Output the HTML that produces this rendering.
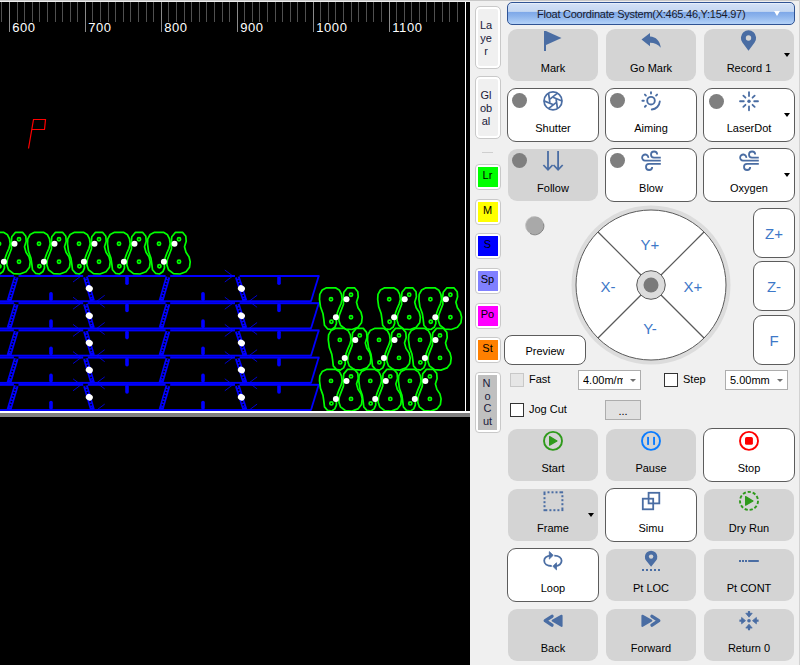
<!DOCTYPE html><html><head><meta charset="utf-8"><style>
*{box-sizing:border-box}
html,body{margin:0;padding:0}
body{width:800px;height:665px;overflow:hidden;position:relative;background:#f0f0f0;font-family:"Liberation Sans",sans-serif;color:#000}
.topline{position:absolute;left:0;top:0;width:800px;height:1px;background:#c8c8c8}
.rline{position:absolute;left:799px;top:0;width:1px;height:665px;background:#d2d2d2}
.btn{position:absolute;height:54px;border-radius:9px}
.bg{background:#d4d4d4;margin-left:1px;margin-top:1px;width:90px!important;height:52px;border-radius:9px}
.bw{background:#fff;border:1px solid #5c5c5c}
.lbl{position:absolute;left:0;right:0;top:32px;text-align:center;font-size:11px;line-height:14px;white-space:nowrap}

.dot{position:absolute;left:4px;top:4px;width:15px;height:15px;border-radius:50%;background:#7f7f7f}

.arr{position:absolute;right:4px;top:23.5px;width:0;height:0;border-left:3.5px solid transparent;border-right:3.5px solid transparent;border-top:4px solid #000}

.side{position:absolute;left:475px;width:26px;border-radius:5px;background:#f0f0f0;border:1px solid #c9c9c9;box-shadow:inset 0 0 0 2px #fff}
.side span{position:absolute;left:0;right:4px;text-align:center;font-size:11px;line-height:13px;color:#1a1a3a}
.sw{position:absolute;left:475px;width:26px;height:26px;border-radius:4px;background:#fff;border:1px solid #c9c9c9}
.sw div{position:absolute;left:2px;top:2px;width:20px;height:20px;font-size:11px;line-height:14px;text-align:center;color:#000;text-indent:-1px;padding-top:1px}
.hdr{position:absolute;left:507px;top:2px;width:288px;height:23px;border-radius:5px;border:1px solid #2f5394;background:linear-gradient(#eef4fd 0%,#d0dff5 8%,#c6d8f2 38%,#bcd2f1 41%,#7ea8e8 44%,#8cb3ec 62%,#b4d2f8 100%);font-size:11px;letter-spacing:-0.25px}
.hdr span{position:absolute;left:29px;top:5px;line-height:13px;color:#1a1a2a}
.hdr i{position:absolute;left:266px;top:7.5px;width:0;height:0;border-left:3.5px solid transparent;border-right:3.5px solid transparent;border-top:5.5px solid #fff}
.zb{position:absolute;left:753px;width:42px;height:50px;border-radius:9px;background:#fff;border:1px solid #5c5c5c;color:#3d78c8;font-size:15px;text-align:center;line-height:50px}
.pv{position:absolute;left:504px;top:335px;width:82px;height:30px;border-radius:8px;background:#fff;border:1px solid #5c5c5c;font-size:11px;text-align:center;line-height:31px}
.cb{position:absolute;width:14px;height:14px;background:#fff;border:1px solid #333}
.cbd{background:#e6e6e6;border-color:#c8c8c8}
.t11{position:absolute;font-size:11px;line-height:13px;white-space:nowrap}
.combo{position:absolute;height:20px;background:#fff;border:1px solid #adadad;font-size:11px;line-height:18px;overflow:hidden;white-space:nowrap}
.combo span{position:absolute;left:4px;top:0;width:40px;overflow:hidden}
.combo i{position:absolute;right:4px;top:8px;width:0;height:0;border-left:3.5px solid transparent;border-right:3.5px solid transparent;border-top:3.5px solid #707070}
.dots3{position:absolute;left:605px;top:400px;width:36px;height:20px;background:#e1e1e1;border:1px solid #adadad;font-size:11px;text-align:center;line-height:20px}
</style></head><body>
<svg width="470" height="665" viewBox="0 0 470 665" style="position:absolute;left:0;top:0">
<defs>
<g id="pr"><path d="M-4.50,-11.50 L4.50,-11.50 L8.50,-9.00 L10.50,-5.00 L11.20,0.00 L10.00,4.50 L8.00,9.00 L6.20,14.00 L5.20,19.00 L5.50,24.00 L3.80,28.00 L0.50,30.20 L-3.50,29.50 L-6.50,26.00 L-7.20,20.00 L-8.00,14.50 L-10.50,7.50 L-11.50,0.00 L-11.20,-5.00 L-8.80,-9.30 Z"/><path d="M16.50,-11.50 L23.50,-11.50 L26.80,-7.50 L27.20,-2.50 L25.50,3.00 L27.00,8.50 L30.00,13.00 L31.20,18.00 L30.50,23.50 L27.00,28.00 L21.00,30.20 L14.50,29.80 L9.50,26.00 L7.80,21.00 L8.30,16.00 L10.20,11.00 L12.50,5.00 L12.20,-1.00 L12.80,-7.00 Z"/><circle cx="0" cy="0" r="1.6"/><circle cx="0.4" cy="22.5" r="1.6"/><circle cx="20" cy="-4.5" r="1.6"/><circle cx="20" cy="18" r="1.6"/></g>
</defs>
<rect x="0" y="0" width="470" height="665" fill="#000"/>
<rect x="0" y="0" width="470" height="1" fill="#c8c8c8"/>
<rect x="0" y="1" width="470" height="1" fill="#f0f0f0"/>
<line x1="1.5" y1="2" x2="1.5" y2="22" stroke="#505050" stroke-width="1"/>
<line x1="9.5" y1="2" x2="9.5" y2="32" stroke="#8a8a8a" stroke-width="1"/>
<line x1="17.5" y1="2" x2="17.5" y2="22" stroke="#505050" stroke-width="1"/>
<line x1="24.5" y1="2" x2="24.5" y2="22" stroke="#505050" stroke-width="1"/>
<line x1="32.5" y1="2" x2="32.5" y2="22" stroke="#505050" stroke-width="1"/>
<line x1="39.5" y1="2" x2="39.5" y2="22" stroke="#505050" stroke-width="1"/>
<line x1="47.5" y1="2" x2="47.5" y2="22" stroke="#505050" stroke-width="1"/>
<line x1="55.5" y1="2" x2="55.5" y2="22" stroke="#505050" stroke-width="1"/>
<line x1="62.5" y1="2" x2="62.5" y2="22" stroke="#505050" stroke-width="1"/>
<line x1="70.5" y1="2" x2="70.5" y2="22" stroke="#505050" stroke-width="1"/>
<line x1="77.5" y1="2" x2="77.5" y2="22" stroke="#505050" stroke-width="1"/>
<line x1="85.5" y1="2" x2="85.5" y2="32" stroke="#8a8a8a" stroke-width="1"/>
<line x1="92.5" y1="2" x2="92.5" y2="22" stroke="#505050" stroke-width="1"/>
<line x1="100.5" y1="2" x2="100.5" y2="22" stroke="#505050" stroke-width="1"/>
<line x1="108.5" y1="2" x2="108.5" y2="22" stroke="#505050" stroke-width="1"/>
<line x1="115.5" y1="2" x2="115.5" y2="22" stroke="#505050" stroke-width="1"/>
<line x1="123.5" y1="2" x2="123.5" y2="22" stroke="#505050" stroke-width="1"/>
<line x1="130.5" y1="2" x2="130.5" y2="22" stroke="#505050" stroke-width="1"/>
<line x1="138.5" y1="2" x2="138.5" y2="22" stroke="#505050" stroke-width="1"/>
<line x1="146.5" y1="2" x2="146.5" y2="22" stroke="#505050" stroke-width="1"/>
<line x1="153.5" y1="2" x2="153.5" y2="22" stroke="#505050" stroke-width="1"/>
<line x1="161.5" y1="2" x2="161.5" y2="32" stroke="#8a8a8a" stroke-width="1"/>
<line x1="168.5" y1="2" x2="168.5" y2="22" stroke="#505050" stroke-width="1"/>
<line x1="176.5" y1="2" x2="176.5" y2="22" stroke="#505050" stroke-width="1"/>
<line x1="184.5" y1="2" x2="184.5" y2="22" stroke="#505050" stroke-width="1"/>
<line x1="191.5" y1="2" x2="191.5" y2="22" stroke="#505050" stroke-width="1"/>
<line x1="199.5" y1="2" x2="199.5" y2="22" stroke="#505050" stroke-width="1"/>
<line x1="206.5" y1="2" x2="206.5" y2="22" stroke="#505050" stroke-width="1"/>
<line x1="214.5" y1="2" x2="214.5" y2="22" stroke="#505050" stroke-width="1"/>
<line x1="222.5" y1="2" x2="222.5" y2="22" stroke="#505050" stroke-width="1"/>
<line x1="229.5" y1="2" x2="229.5" y2="22" stroke="#505050" stroke-width="1"/>
<line x1="237.5" y1="2" x2="237.5" y2="32" stroke="#8a8a8a" stroke-width="1"/>
<line x1="244.5" y1="2" x2="244.5" y2="22" stroke="#505050" stroke-width="1"/>
<line x1="252.5" y1="2" x2="252.5" y2="22" stroke="#505050" stroke-width="1"/>
<line x1="259.5" y1="2" x2="259.5" y2="22" stroke="#505050" stroke-width="1"/>
<line x1="267.5" y1="2" x2="267.5" y2="22" stroke="#505050" stroke-width="1"/>
<line x1="275.5" y1="2" x2="275.5" y2="22" stroke="#505050" stroke-width="1"/>
<line x1="282.5" y1="2" x2="282.5" y2="22" stroke="#505050" stroke-width="1"/>
<line x1="290.5" y1="2" x2="290.5" y2="22" stroke="#505050" stroke-width="1"/>
<line x1="297.5" y1="2" x2="297.5" y2="22" stroke="#505050" stroke-width="1"/>
<line x1="305.5" y1="2" x2="305.5" y2="22" stroke="#505050" stroke-width="1"/>
<line x1="313.5" y1="2" x2="313.5" y2="32" stroke="#8a8a8a" stroke-width="1"/>
<line x1="320.5" y1="2" x2="320.5" y2="22" stroke="#505050" stroke-width="1"/>
<line x1="328.5" y1="2" x2="328.5" y2="22" stroke="#505050" stroke-width="1"/>
<line x1="335.5" y1="2" x2="335.5" y2="22" stroke="#505050" stroke-width="1"/>
<line x1="343.5" y1="2" x2="343.5" y2="22" stroke="#505050" stroke-width="1"/>
<line x1="351.5" y1="2" x2="351.5" y2="22" stroke="#505050" stroke-width="1"/>
<line x1="358.5" y1="2" x2="358.5" y2="22" stroke="#505050" stroke-width="1"/>
<line x1="366.5" y1="2" x2="366.5" y2="22" stroke="#505050" stroke-width="1"/>
<line x1="373.5" y1="2" x2="373.5" y2="22" stroke="#505050" stroke-width="1"/>
<line x1="381.5" y1="2" x2="381.5" y2="22" stroke="#505050" stroke-width="1"/>
<line x1="389.5" y1="2" x2="389.5" y2="32" stroke="#8a8a8a" stroke-width="1"/>
<line x1="396.5" y1="2" x2="396.5" y2="22" stroke="#505050" stroke-width="1"/>
<line x1="404.5" y1="2" x2="404.5" y2="22" stroke="#505050" stroke-width="1"/>
<line x1="411.5" y1="2" x2="411.5" y2="22" stroke="#505050" stroke-width="1"/>
<line x1="419.5" y1="2" x2="419.5" y2="22" stroke="#505050" stroke-width="1"/>
<line x1="426.5" y1="2" x2="426.5" y2="22" stroke="#505050" stroke-width="1"/>
<line x1="434.5" y1="2" x2="434.5" y2="22" stroke="#505050" stroke-width="1"/>
<line x1="442.5" y1="2" x2="442.5" y2="22" stroke="#505050" stroke-width="1"/>
<line x1="449.5" y1="2" x2="449.5" y2="22" stroke="#505050" stroke-width="1"/>
<line x1="457.5" y1="2" x2="457.5" y2="22" stroke="#505050" stroke-width="1"/>
<text x="12.2" y="32" fill="#fff" font-family="Liberation Sans" font-size="13" letter-spacing="0.6">600</text>
<text x="88.2" y="32" fill="#fff" font-family="Liberation Sans" font-size="13" letter-spacing="0.6">700</text>
<text x="164.2" y="32" fill="#fff" font-family="Liberation Sans" font-size="13" letter-spacing="0.6">800</text>
<text x="240.2" y="32" fill="#fff" font-family="Liberation Sans" font-size="13" letter-spacing="0.6">900</text>
<text x="316.2" y="32" fill="#fff" font-family="Liberation Sans" font-size="13" letter-spacing="0.6">1000</text>
<text x="392.2" y="32" fill="#fff" font-family="Liberation Sans" font-size="13" letter-spacing="0.6">1100</text>
<path d="M28.5,148.5 L33.5,119.5 L45.5,119.5 L44.5,129.5 L31.5,129.5" fill="none" stroke="#ff0000" stroke-width="1.2"/>
<rect x="465" y="2" width="1" height="409" fill="#fff"/>
<rect x="0" y="275.0" width="319.5" height="2" fill="#0000ff"/>
<rect x="0" y="300.3" width="311.5" height="2" fill="#0000ff"/>
<line x1="318.7" y1="276.0" x2="311" y2="301.3" stroke="#0000ff" stroke-width="1.8"/>
<rect x="13.9" y="275.0" width="4.6" height="2" fill="#000"/>
<line x1="16.2" y1="277.0" x2="9.0" y2="301.0" stroke="#0000ff" stroke-width="4.8"/>
<line x1="16.2" y1="277.0" x2="15.6" y2="279.0" stroke="#000" stroke-width="0.9"/>
<line x1="15.2" y1="280.3" x2="9.7" y2="298.5" stroke="#000" stroke-width="1.6" stroke-dasharray="1.6 1.5"/>
<rect x="165.6" y="275.0" width="4.6" height="2" fill="#000"/>
<line x1="167.9" y1="277.0" x2="161.0" y2="301.0" stroke="#0000ff" stroke-width="4.8"/>
<line x1="167.9" y1="277.0" x2="167.3" y2="279.0" stroke="#000" stroke-width="0.9"/>
<line x1="166.9" y1="280.3" x2="161.7" y2="298.5" stroke="#000" stroke-width="1.6" stroke-dasharray="1.6 1.5"/>
<rect x="83.2" y="275.0" width="4.6" height="2" fill="#000"/>
<line x1="85.5" y1="277.0" x2="92.5" y2="301.0" stroke="#0000ff" stroke-width="4.8"/>
<line x1="85.5" y1="277.0" x2="86.1" y2="279.0" stroke="#000" stroke-width="0.9"/>
<line x1="86.5" y1="280.3" x2="91.8" y2="298.5" stroke="#000" stroke-width="1.6" stroke-dasharray="1.6 1.5"/>
<rect x="235.0" y="275.0" width="4.6" height="2" fill="#000"/>
<line x1="237.3" y1="277.0" x2="244.9" y2="301.0" stroke="#0000ff" stroke-width="4.8"/>
<line x1="237.3" y1="277.0" x2="237.9" y2="279.0" stroke="#000" stroke-width="0.9"/>
<line x1="238.4" y1="280.3" x2="244.1" y2="298.5" stroke="#000" stroke-width="1.6" stroke-dasharray="1.6 1.5"/>
<ellipse cx="89.3" cy="288.5" rx="3.6" ry="3.2" fill="#fff" transform="rotate(30 89.3 288.5)"/>
<path d="M73.0,270.0 L81.0,276.0 L73.0,282.0" fill="none" stroke="#0000ff" stroke-width="0.8"/>
<path d="M104.7,295.3 L96.7,301.3 L104.7,307.3" fill="none" stroke="#0000ff" stroke-width="0.8"/>
<ellipse cx="241.4" cy="288.5" rx="3.6" ry="3.2" fill="#fff" transform="rotate(30 241.4 288.5)"/>
<path d="M224.8,270.0 L232.8,276.0 L224.8,282.0" fill="none" stroke="#0000ff" stroke-width="0.8"/>
<path d="M257.1,295.3 L249.1,301.3 L257.1,307.3" fill="none" stroke="#0000ff" stroke-width="0.8"/>
<rect x="49.2" y="292.0" width="3.6" height="9" rx="1.8" fill="#0000ff"/>
<rect x="201.2" y="292.0" width="3.6" height="9" rx="1.8" fill="#0000ff"/>
<rect x="125.2" y="276.0" width="3.6" height="9" rx="1.8" fill="#0000ff"/>
<rect x="277.2" y="276.0" width="3.6" height="9" rx="1.8" fill="#0000ff"/>
<rect x="0" y="302.2" width="319.5" height="2" fill="#0000ff"/>
<rect x="0" y="327.5" width="311.5" height="2" fill="#0000ff"/>
<line x1="318.7" y1="303.2" x2="311" y2="328.5" stroke="#0000ff" stroke-width="1.8"/>
<rect x="13.9" y="302.2" width="4.6" height="2" fill="#000"/>
<line x1="16.2" y1="304.2" x2="9.0" y2="328.2" stroke="#0000ff" stroke-width="4.8"/>
<line x1="16.2" y1="304.2" x2="15.6" y2="306.2" stroke="#000" stroke-width="0.9"/>
<line x1="15.2" y1="307.5" x2="9.7" y2="325.7" stroke="#000" stroke-width="1.6" stroke-dasharray="1.6 1.5"/>
<rect x="165.6" y="302.2" width="4.6" height="2" fill="#000"/>
<line x1="167.9" y1="304.2" x2="161.0" y2="328.2" stroke="#0000ff" stroke-width="4.8"/>
<line x1="167.9" y1="304.2" x2="167.3" y2="306.2" stroke="#000" stroke-width="0.9"/>
<line x1="166.9" y1="307.5" x2="161.7" y2="325.7" stroke="#000" stroke-width="1.6" stroke-dasharray="1.6 1.5"/>
<rect x="83.2" y="302.2" width="4.6" height="2" fill="#000"/>
<line x1="85.5" y1="304.2" x2="92.5" y2="328.2" stroke="#0000ff" stroke-width="4.8"/>
<line x1="85.5" y1="304.2" x2="86.1" y2="306.2" stroke="#000" stroke-width="0.9"/>
<line x1="86.5" y1="307.5" x2="91.8" y2="325.7" stroke="#000" stroke-width="1.6" stroke-dasharray="1.6 1.5"/>
<rect x="235.0" y="302.2" width="4.6" height="2" fill="#000"/>
<line x1="237.3" y1="304.2" x2="244.9" y2="328.2" stroke="#0000ff" stroke-width="4.8"/>
<line x1="237.3" y1="304.2" x2="237.9" y2="306.2" stroke="#000" stroke-width="0.9"/>
<line x1="238.4" y1="307.5" x2="244.1" y2="325.7" stroke="#000" stroke-width="1.6" stroke-dasharray="1.6 1.5"/>
<ellipse cx="89.3" cy="315.7" rx="3.6" ry="3.2" fill="#fff" transform="rotate(30 89.3 315.7)"/>
<path d="M73.0,297.2 L81.0,303.2 L73.0,309.2" fill="none" stroke="#0000ff" stroke-width="0.8"/>
<path d="M104.7,322.5 L96.7,328.5 L104.7,334.5" fill="none" stroke="#0000ff" stroke-width="0.8"/>
<ellipse cx="241.4" cy="315.7" rx="3.6" ry="3.2" fill="#fff" transform="rotate(30 241.4 315.7)"/>
<path d="M224.8,297.2 L232.8,303.2 L224.8,309.2" fill="none" stroke="#0000ff" stroke-width="0.8"/>
<path d="M257.1,322.5 L249.1,328.5 L257.1,334.5" fill="none" stroke="#0000ff" stroke-width="0.8"/>
<rect x="49.2" y="319.2" width="3.6" height="9" rx="1.8" fill="#0000ff"/>
<rect x="201.2" y="319.2" width="3.6" height="9" rx="1.8" fill="#0000ff"/>
<rect x="125.2" y="303.2" width="3.6" height="9" rx="1.8" fill="#0000ff"/>
<rect x="277.2" y="303.2" width="3.6" height="9" rx="1.8" fill="#0000ff"/>
<rect x="0" y="329.4" width="319.5" height="2" fill="#0000ff"/>
<rect x="0" y="354.7" width="311.5" height="2" fill="#0000ff"/>
<line x1="318.7" y1="330.4" x2="311" y2="355.7" stroke="#0000ff" stroke-width="1.8"/>
<rect x="13.9" y="329.4" width="4.6" height="2" fill="#000"/>
<line x1="16.2" y1="331.4" x2="9.0" y2="355.4" stroke="#0000ff" stroke-width="4.8"/>
<line x1="16.2" y1="331.4" x2="15.6" y2="333.4" stroke="#000" stroke-width="0.9"/>
<line x1="15.2" y1="334.7" x2="9.7" y2="352.9" stroke="#000" stroke-width="1.6" stroke-dasharray="1.6 1.5"/>
<rect x="165.6" y="329.4" width="4.6" height="2" fill="#000"/>
<line x1="167.9" y1="331.4" x2="161.0" y2="355.4" stroke="#0000ff" stroke-width="4.8"/>
<line x1="167.9" y1="331.4" x2="167.3" y2="333.4" stroke="#000" stroke-width="0.9"/>
<line x1="166.9" y1="334.7" x2="161.7" y2="352.9" stroke="#000" stroke-width="1.6" stroke-dasharray="1.6 1.5"/>
<rect x="83.2" y="329.4" width="4.6" height="2" fill="#000"/>
<line x1="85.5" y1="331.4" x2="92.5" y2="355.4" stroke="#0000ff" stroke-width="4.8"/>
<line x1="85.5" y1="331.4" x2="86.1" y2="333.4" stroke="#000" stroke-width="0.9"/>
<line x1="86.5" y1="334.7" x2="91.8" y2="352.9" stroke="#000" stroke-width="1.6" stroke-dasharray="1.6 1.5"/>
<rect x="235.0" y="329.4" width="4.6" height="2" fill="#000"/>
<line x1="237.3" y1="331.4" x2="244.9" y2="355.4" stroke="#0000ff" stroke-width="4.8"/>
<line x1="237.3" y1="331.4" x2="237.9" y2="333.4" stroke="#000" stroke-width="0.9"/>
<line x1="238.4" y1="334.7" x2="244.1" y2="352.9" stroke="#000" stroke-width="1.6" stroke-dasharray="1.6 1.5"/>
<ellipse cx="89.3" cy="342.9" rx="3.6" ry="3.2" fill="#fff" transform="rotate(30 89.3 342.9)"/>
<path d="M73.0,324.4 L81.0,330.4 L73.0,336.4" fill="none" stroke="#0000ff" stroke-width="0.8"/>
<path d="M104.7,349.7 L96.7,355.7 L104.7,361.7" fill="none" stroke="#0000ff" stroke-width="0.8"/>
<ellipse cx="241.4" cy="342.9" rx="3.6" ry="3.2" fill="#fff" transform="rotate(30 241.4 342.9)"/>
<path d="M224.8,324.4 L232.8,330.4 L224.8,336.4" fill="none" stroke="#0000ff" stroke-width="0.8"/>
<path d="M257.1,349.7 L249.1,355.7 L257.1,361.7" fill="none" stroke="#0000ff" stroke-width="0.8"/>
<rect x="49.2" y="346.4" width="3.6" height="9" rx="1.8" fill="#0000ff"/>
<rect x="201.2" y="346.4" width="3.6" height="9" rx="1.8" fill="#0000ff"/>
<rect x="125.2" y="330.4" width="3.6" height="9" rx="1.8" fill="#0000ff"/>
<rect x="277.2" y="330.4" width="3.6" height="9" rx="1.8" fill="#0000ff"/>
<rect x="0" y="356.6" width="319.5" height="2" fill="#0000ff"/>
<rect x="0" y="381.9" width="311.5" height="2" fill="#0000ff"/>
<line x1="318.7" y1="357.6" x2="311" y2="382.9" stroke="#0000ff" stroke-width="1.8"/>
<rect x="13.9" y="356.6" width="4.6" height="2" fill="#000"/>
<line x1="16.2" y1="358.6" x2="9.0" y2="382.6" stroke="#0000ff" stroke-width="4.8"/>
<line x1="16.2" y1="358.6" x2="15.6" y2="360.6" stroke="#000" stroke-width="0.9"/>
<line x1="15.2" y1="361.9" x2="9.7" y2="380.1" stroke="#000" stroke-width="1.6" stroke-dasharray="1.6 1.5"/>
<rect x="165.6" y="356.6" width="4.6" height="2" fill="#000"/>
<line x1="167.9" y1="358.6" x2="161.0" y2="382.6" stroke="#0000ff" stroke-width="4.8"/>
<line x1="167.9" y1="358.6" x2="167.3" y2="360.6" stroke="#000" stroke-width="0.9"/>
<line x1="166.9" y1="361.9" x2="161.7" y2="380.1" stroke="#000" stroke-width="1.6" stroke-dasharray="1.6 1.5"/>
<rect x="83.2" y="356.6" width="4.6" height="2" fill="#000"/>
<line x1="85.5" y1="358.6" x2="92.5" y2="382.6" stroke="#0000ff" stroke-width="4.8"/>
<line x1="85.5" y1="358.6" x2="86.1" y2="360.6" stroke="#000" stroke-width="0.9"/>
<line x1="86.5" y1="361.9" x2="91.8" y2="380.1" stroke="#000" stroke-width="1.6" stroke-dasharray="1.6 1.5"/>
<rect x="235.0" y="356.6" width="4.6" height="2" fill="#000"/>
<line x1="237.3" y1="358.6" x2="244.9" y2="382.6" stroke="#0000ff" stroke-width="4.8"/>
<line x1="237.3" y1="358.6" x2="237.9" y2="360.6" stroke="#000" stroke-width="0.9"/>
<line x1="238.4" y1="361.9" x2="244.1" y2="380.1" stroke="#000" stroke-width="1.6" stroke-dasharray="1.6 1.5"/>
<ellipse cx="89.3" cy="370.1" rx="3.6" ry="3.2" fill="#fff" transform="rotate(30 89.3 370.1)"/>
<path d="M73.0,351.6 L81.0,357.6 L73.0,363.6" fill="none" stroke="#0000ff" stroke-width="0.8"/>
<path d="M104.7,376.9 L96.7,382.9 L104.7,388.9" fill="none" stroke="#0000ff" stroke-width="0.8"/>
<ellipse cx="241.4" cy="370.1" rx="3.6" ry="3.2" fill="#fff" transform="rotate(30 241.4 370.1)"/>
<path d="M224.8,351.6 L232.8,357.6 L224.8,363.6" fill="none" stroke="#0000ff" stroke-width="0.8"/>
<path d="M257.1,376.9 L249.1,382.9 L257.1,388.9" fill="none" stroke="#0000ff" stroke-width="0.8"/>
<rect x="49.2" y="373.6" width="3.6" height="9" rx="1.8" fill="#0000ff"/>
<rect x="201.2" y="373.6" width="3.6" height="9" rx="1.8" fill="#0000ff"/>
<rect x="125.2" y="357.6" width="3.6" height="9" rx="1.8" fill="#0000ff"/>
<rect x="277.2" y="357.6" width="3.6" height="9" rx="1.8" fill="#0000ff"/>
<rect x="0" y="383.8" width="319.5" height="2" fill="#0000ff"/>
<rect x="0" y="409.1" width="311.5" height="2" fill="#0000ff"/>
<line x1="318.7" y1="384.8" x2="311" y2="410.1" stroke="#0000ff" stroke-width="1.8"/>
<rect x="13.9" y="383.8" width="4.6" height="2" fill="#000"/>
<line x1="16.2" y1="385.8" x2="9.0" y2="409.8" stroke="#0000ff" stroke-width="4.8"/>
<line x1="16.2" y1="385.8" x2="15.6" y2="387.8" stroke="#000" stroke-width="0.9"/>
<line x1="15.2" y1="389.1" x2="9.7" y2="407.3" stroke="#000" stroke-width="1.6" stroke-dasharray="1.6 1.5"/>
<rect x="165.6" y="383.8" width="4.6" height="2" fill="#000"/>
<line x1="167.9" y1="385.8" x2="161.0" y2="409.8" stroke="#0000ff" stroke-width="4.8"/>
<line x1="167.9" y1="385.8" x2="167.3" y2="387.8" stroke="#000" stroke-width="0.9"/>
<line x1="166.9" y1="389.1" x2="161.7" y2="407.3" stroke="#000" stroke-width="1.6" stroke-dasharray="1.6 1.5"/>
<rect x="83.2" y="383.8" width="4.6" height="2" fill="#000"/>
<line x1="85.5" y1="385.8" x2="92.5" y2="409.8" stroke="#0000ff" stroke-width="4.8"/>
<line x1="85.5" y1="385.8" x2="86.1" y2="387.8" stroke="#000" stroke-width="0.9"/>
<line x1="86.5" y1="389.1" x2="91.8" y2="407.3" stroke="#000" stroke-width="1.6" stroke-dasharray="1.6 1.5"/>
<rect x="235.0" y="383.8" width="4.6" height="2" fill="#000"/>
<line x1="237.3" y1="385.8" x2="244.9" y2="409.8" stroke="#0000ff" stroke-width="4.8"/>
<line x1="237.3" y1="385.8" x2="237.9" y2="387.8" stroke="#000" stroke-width="0.9"/>
<line x1="238.4" y1="389.1" x2="244.1" y2="407.3" stroke="#000" stroke-width="1.6" stroke-dasharray="1.6 1.5"/>
<ellipse cx="89.3" cy="397.3" rx="3.6" ry="3.2" fill="#fff" transform="rotate(30 89.3 397.3)"/>
<path d="M73.0,378.8 L81.0,384.8 L73.0,390.8" fill="none" stroke="#0000ff" stroke-width="0.8"/>
<path d="M104.7,404.1 L96.7,410.1 L104.7,416.1" fill="none" stroke="#0000ff" stroke-width="0.8"/>
<ellipse cx="241.4" cy="397.3" rx="3.6" ry="3.2" fill="#fff" transform="rotate(30 241.4 397.3)"/>
<path d="M224.8,378.8 L232.8,384.8 L224.8,390.8" fill="none" stroke="#0000ff" stroke-width="0.8"/>
<path d="M257.1,404.1 L249.1,410.1 L257.1,416.1" fill="none" stroke="#0000ff" stroke-width="0.8"/>
<rect x="49.2" y="400.8" width="3.6" height="9" rx="1.8" fill="#0000ff"/>
<rect x="201.2" y="400.8" width="3.6" height="9" rx="1.8" fill="#0000ff"/>
<rect x="125.2" y="384.8" width="3.6" height="9" rx="1.8" fill="#0000ff"/>
<rect x="277.2" y="384.8" width="3.6" height="9" rx="1.8" fill="#0000ff"/>
<g fill="none" stroke="#00ff00" stroke-width="1.7" stroke-linejoin="round">
<use href="#pr" x="-1.00" y="243.8"/>
<use href="#pr" x="39.00" y="243.8"/>
<use href="#pr" x="79.00" y="243.8"/>
<use href="#pr" x="119.00" y="243.8"/>
<use href="#pr" x="159.00" y="243.8"/>
<use href="#pr" x="331.00" y="299.30"/>
<use href="#pr" x="389.20" y="299.30"/>
<use href="#pr" x="430.40" y="299.30"/>
<use href="#pr" x="339.80" y="339.90"/>
<use href="#pr" x="379.00" y="339.90"/>
<use href="#pr" x="420.00" y="339.90"/>
<use href="#pr" x="331.00" y="380.90"/>
<use href="#pr" x="370.30" y="380.90"/>
<use href="#pr" x="409.90" y="380.90"/>
</g><g fill="#fff">
<circle cx="14.50" cy="243.80" r="3"/><circle cx="3.90" cy="261.80" r="3"/>
<circle cx="54.50" cy="243.80" r="3"/><circle cx="43.90" cy="261.80" r="3"/>
<circle cx="94.50" cy="243.80" r="3"/><circle cx="83.90" cy="261.80" r="3"/>
<circle cx="134.50" cy="243.80" r="3"/><circle cx="123.90" cy="261.80" r="3"/>
<circle cx="174.50" cy="243.80" r="3"/><circle cx="163.90" cy="261.80" r="3"/>
<circle cx="346.50" cy="299.30" r="3"/><circle cx="335.90" cy="317.30" r="3"/>
<circle cx="404.70" cy="299.30" r="3"/><circle cx="394.10" cy="317.30" r="3"/>
<circle cx="445.90" cy="299.30" r="3"/><circle cx="435.30" cy="317.30" r="3"/>
<circle cx="355.30" cy="339.90" r="3"/><circle cx="344.70" cy="357.90" r="3"/>
<circle cx="394.50" cy="339.90" r="3"/><circle cx="383.90" cy="357.90" r="3"/>
<circle cx="435.50" cy="339.90" r="3"/><circle cx="424.90" cy="357.90" r="3"/>
<circle cx="346.50" cy="380.90" r="3"/><circle cx="335.90" cy="398.90" r="3"/>
<circle cx="385.80" cy="380.90" r="3"/><circle cx="375.20" cy="398.90" r="3"/>
<circle cx="425.40" cy="380.90" r="3"/><circle cx="414.80" cy="398.90" r="3"/>
</g>
<rect x="0" y="411" width="470" height="2" fill="#fff"/>
<rect x="0" y="413" width="470" height="4" fill="#808080"/>
</svg>
<div class="topline"></div><div class="rline"></div>

<div class="side" style="top:6px;height:63px"><span style="top:12px">La<br>ye<br>r</span></div>
<div class="side" style="top:76px;height:63px"><span style="top:12px">Gl<br>ob<br>al</span></div>
<div style="position:absolute;left:482px;top:152px;width:11px;height:1px;background:#cfcfcf"></div>
<div class="sw" style="top:164px"><div style="background:#00ff00">Lr</div></div>
<div class="sw" style="top:199px"><div style="background:#ffff00">M</div></div>
<div class="sw" style="top:233px"><div style="background:#0000ff">S</div></div>
<div class="sw" style="top:268px"><div style="background:#8080ff">Sp</div></div>
<div class="sw" style="top:303px"><div style="background:#ff00ff">Po</div></div>
<div class="sw" style="top:337px"><div style="background:#ff8000">St</div></div>
<div class="sw" style="top:372px;height:61px"><div style="background:#c0c0c0;height:55px;width:19px;line-height:12.6px;padding-top:2px;text-indent:-2px;color:#1a1a3a">N<br>o<br>C<br>ut</div></div>

<div class="hdr"><span>Float Coordinate System(X:465.46,Y:154.97)</span><i></i></div>

<svg width="800" height="665" style="position:absolute;left:0;top:0">
<circle cx="534.7" cy="225.5" r="9.3" fill="#a9a9a9"/><path d="M543.6,223.5 A9.1,9.1 0 0 1 530,233.4" fill="none" stroke="#7a7a7a" stroke-width="0.9"/><path d="M526.2,229 A9.1,9.1 0 0 1 536,216.5" fill="none" stroke="#c8c8c8" stroke-width="0.8"/>
<circle cx="651" cy="285" r="79.5" fill="#dcdcdc"/>
<circle cx="651" cy="285" r="75" fill="#fff" stroke="#5a5a5a" stroke-width="1"/>
<g stroke="#5a5a5a" stroke-width="1.2">
<line x1="598" y1="232" x2="641" y2="275"/><line x1="704" y1="232" x2="661" y2="275"/>
<line x1="598" y1="338" x2="641" y2="295"/><line x1="704" y1="338" x2="661" y2="295"/>
</g>
<circle cx="651" cy="285" r="14.3" fill="#dcdcdc" stroke="#5a5a5a" stroke-width="1"/>
<circle cx="651" cy="285" r="7.5" fill="#7a7a7a"/>
<g fill="#3d78c8" font-family="Liberation Sans" font-size="15" text-anchor="middle">
<text x="650" y="250">Y+</text><text x="608" y="292">X-</text><text x="693" y="292">X+</text><text x="650" y="334">Y-</text>
</g>
</svg>
<div class="zb" style="top:208px">Z+</div>
<div class="zb" style="top:261px">Z-</div>
<div class="zb" style="top:315px">F</div>
<div class="pv">Preview</div>
<div class="cb cbd" style="left:510px;top:373px"></div><div class="t11" style="left:529px;top:373px">Fast</div>
<div class="combo" style="left:578px;top:370px;width:63px"><span>4.00m/m</span><i></i></div>
<div class="cb" style="left:664px;top:373px"></div><div class="t11" style="left:683px;top:373px">Step</div>
<div class="combo" style="left:725px;top:370px;width:63px"><span>5.00mm</span><i></i></div>
<div class="cb" style="left:510px;top:403px"></div><div class="t11" style="left:529px;top:403px">Jog Cut</div>
<div class="dots3">...</div>

<div class="btn bg" style="left:507px;top:28px;width:92px"><span class="lbl">Mark</span></div>
<div class="btn bg" style="left:605px;top:28px;width:92px"><span class="lbl">Go Mark</span></div>
<div class="btn bg" style="left:703px;top:28px;width:92px"><span class="arr"></span><span class="lbl">Record 1</span></div>
<div class="btn bw" style="left:507px;top:88px;width:92px"><span class="dot"></span><span class="lbl">Shutter</span></div>
<div class="btn bw" style="left:605px;top:88px;width:92px"><span class="dot"></span><span class="lbl">Aiming</span></div>
<div class="btn bw" style="left:703px;top:88px;width:92px"><span class="dot" style="left:5px;top:5px"></span><span class="arr"></span><span class="lbl">LaserDot</span></div>
<div class="btn bg" style="left:507px;top:148px;width:92px"><span class="dot"></span><span class="lbl">Follow</span></div>
<div class="btn bw" style="left:605px;top:148px;width:92px"><span class="dot"></span><span class="lbl">Blow</span></div>
<div class="btn bw" style="left:703px;top:148px;width:92px"><span class="arr"></span><span class="lbl">Oxygen</span></div>
<div class="btn bg" style="left:507px;top:428px;width:92px"><span class="lbl">Start</span></div>
<div class="btn bg" style="left:605px;top:428px;width:92px"><span class="lbl">Pause</span></div>
<div class="btn bw" style="left:703px;top:428px;width:92px"><span class="lbl">Stop</span></div>
<div class="btn bg" style="left:507px;top:488px;width:92px"><span class="arr"></span><span class="lbl">Frame</span></div>
<div class="btn bw" style="left:605px;top:488px;width:92px"><span class="lbl">Simu</span></div>
<div class="btn bg" style="left:703px;top:488px;width:92px"><span class="lbl">Dry Run</span></div>
<div class="btn bw" style="left:507px;top:548px;width:92px"><span class="lbl">Loop</span></div>
<div class="btn bg" style="left:605px;top:548px;width:92px"><span class="lbl">Pt LOC</span></div>
<div class="btn bg" style="left:703px;top:548px;width:92px"><span class="lbl">Pt CONT</span></div>
<div class="btn bg" style="left:507px;top:608px;width:92px"><span class="lbl">Back</span></div>
<div class="btn bg" style="left:605px;top:608px;width:92px"><span class="lbl">Forward</span></div>
<div class="btn bg" style="left:703px;top:608px;width:92px"><span class="lbl">Return 0</span></div>
<svg width="800" height="665" style="position:absolute;left:0;top:0;pointer-events:none"><g transform="translate(0.0,0.0)" fill="#4a6da3"><rect x="544" y="31" width="2" height="20"/><path d="M546,31 L561.5,38 L546,45 Z"/></g><g transform="translate(0.0,0.0)"><path d="M641.5,39.5 L650,33 L650,36.6 C656,36.8 660,41 660.8,47.8 C658,44.5 654.5,42.8 650,42.8 L650,46.3 Z" fill="#4a6da3"/></g><g transform="translate(0.0,0.0)"><path d="M748.5,50.75 L742.4,42.5 A7.6,7.6 0 1 1 754.6,42.5 Z" fill="#4a6da3"/><circle cx="748.5" cy="38" r="2.7" fill="#d4d4d4"/></g><g fill="none" stroke="#4a6da3" stroke-width="1.7"><circle cx="553.0" cy="100.9" r="9"/><line x1="553.00" y1="97.30" x2="562.00" y2="100.94"/><line x1="556.12" y1="99.10" x2="557.47" y2="108.71"/><line x1="556.12" y1="102.70" x2="548.47" y2="108.68"/><line x1="553.00" y1="104.50" x2="544.00" y2="100.86"/><line x1="549.88" y1="102.70" x2="548.53" y2="93.09"/><line x1="549.88" y1="99.10" x2="557.53" y2="93.12"/></g><g fill="none" stroke="#4a6da3" stroke-width="1.9" stroke-linecap="round"><circle cx="651.0" cy="100.7" r="3.8"/><line x1="651.00" y1="93.50" x2="651.00" y2="92.10"/><line x1="645.91" y1="95.61" x2="644.92" y2="94.62"/><line x1="656.09" y1="95.61" x2="657.08" y2="94.62"/><line x1="643.80" y1="100.70" x2="642.40" y2="100.70"/><line x1="645.91" y1="105.79" x2="644.92" y2="106.78"/><path d="M659.80,101.50 A8.8,8.8 0 0 1 651.80,109.50"/></g><g fill="none" stroke="#4a6da3" stroke-width="1.8" stroke-linecap="round"><line x1="754.20" y1="101.25" x2="758.00" y2="101.25"/><line x1="752.54" y1="104.79" x2="754.66" y2="106.91"/><line x1="749.00" y1="106.45" x2="749.00" y2="110.25"/><line x1="745.46" y1="104.79" x2="743.34" y2="106.91"/><line x1="743.80" y1="101.25" x2="740.00" y2="101.25"/><line x1="745.46" y1="97.71" x2="743.34" y2="95.59"/><line x1="749.00" y1="96.05" x2="749.00" y2="92.25"/><line x1="752.54" y1="97.71" x2="754.66" y2="95.59"/></g><circle cx="749.0" cy="101.2" r="1.7" fill="#4a6da3"/><g transform="translate(0.0,0.0)" fill="none" stroke="#4a6da3" stroke-width="1.8"><path d="M548,151 V169.5 M543.4,165 L548,169.8 L552.6,165 M558.1,151 V169.5 M553.5,165 L558.1,169.8 L562.7,165"/></g><g transform="translate(0.0,0.0)" fill="none" stroke="#4a6da3" stroke-width="1.8"><path d="M657.2,154.5 A3.1,3.1 0 1 0 654,157.7 H660.8 M648.3,157.9 A3.1,3.1 0 1 0 645,160.7 H660.8 M652.2,167 A3.1,3.1 0 1 1 649,163.8 H660.8"/></g><g transform="translate(98.0,0.0)" fill="none" stroke="#4a6da3" stroke-width="1.8"><path d="M657.2,154.5 A3.1,3.1 0 1 0 654,157.7 H660.8 M648.3,157.9 A3.1,3.1 0 1 0 645,160.7 H660.8 M652.2,167 A3.1,3.1 0 1 1 649,163.8 H660.8"/></g><circle cx="553.0" cy="440.9" r="9.0" fill="none" stroke="#2f9a1b" stroke-width="1.9"/><path d="M549.6,436.6 L557.0,440.9 L549.6,445.2 Z" fill="#2f9a1b" stroke="#2f9a1b" stroke-width="1.2" stroke-linejoin="round"/><circle cx="651.0" cy="440.9" r="9.0" fill="none" stroke="#0a7cff" stroke-width="1.9"/><rect x="647.1" y="436.9" width="1.9" height="8" fill="#0a7cff"/><rect x="653.1" y="436.9" width="1.9" height="8" fill="#0a7cff"/><circle cx="749.0" cy="440.9" r="9.0" fill="none" stroke="#ff0000" stroke-width="1.9"/><rect x="745.0" y="436.9" width="7.9" height="7.9" rx="1.6" fill="#ff0000"/><g transform="translate(0.0,0.0)" fill="#4a6da3"><rect x="547.5" y="491.3" width="2" height="2"/><rect x="551.5" y="491.3" width="2" height="2"/><rect x="555.5" y="491.3" width="2" height="2"/><rect x="559.5" y="491.3" width="3.6" height="2"/><rect x="543.5" y="491.5" width="2" height="3.6"/><rect x="543.5" y="497.2" width="2" height="2"/><rect x="543.5" y="501.2" width="2" height="2"/><rect x="543.5" y="505.2" width="2" height="2"/><rect x="543.5" y="509.2" width="3.8" height="2"/><rect x="549.4" y="509.2" width="2" height="2"/><rect x="553.4" y="509.2" width="2" height="2"/><rect x="557.4" y="509.2" width="2" height="2"/><rect x="561.4" y="495.2" width="2" height="2"/><rect x="561.4" y="499.2" width="2" height="2"/><rect x="561.4" y="503.2" width="2" height="2"/><rect x="561.4" y="507.5" width="2" height="3.6"/></g><g transform="translate(0.0,0.0)" fill="none" stroke="#4a6da3" stroke-width="1.8"><rect x="648.6" y="492.8" width="10.7" height="10.6"/><rect x="642.8" y="498.7" width="10.4" height="10.6"/></g><circle cx="749.0" cy="500.9" r="9.0" fill="none" stroke="#2f9a1b" stroke-width="1.9" stroke-dasharray="3.2 1.9"/><path d="M745.6,496.6 L753.0,500.9 L745.6,505.2 Z" fill="#2f9a1b" stroke="#2f9a1b" stroke-width="1.2" stroke-linejoin="round"/><g transform="translate(0.0,0.0)"><path d="M551.3,555.6 C546.5,555.8 544.2,558.2 544.2,560.8 C544.2,563.6 547,566 551.7,566" fill="none" stroke="#4a6da3" stroke-width="1.8"/><path d="M554.3,555.6 C559,555.8 561.6,558.2 561.6,560.8 C561.6,563.6 559,566 555.5,566" fill="none" stroke="#4a6da3" stroke-width="1.8"/><path d="M549.3,551.6 L553.2,555.3 L549.3,559.1 Z" fill="#4a6da3" stroke="#4a6da3" stroke-width="0.8" stroke-linejoin="round"/><path d="M556.5,562.7 L552.9,566.3 L556.5,569.9 Z" fill="#4a6da3" stroke="#4a6da3" stroke-width="0.8" stroke-linejoin="round"/></g><g transform="translate(0.0,0.0)" fill="#4a6da3"><path d="M651.1,566.7 L646.1,560.5 A6.2,6.2 0 1 1 656.1,560.5 Z"/><circle cx="651.1" cy="556.6" r="2.2" fill="#d4d4d4"/><rect x="642.0" y="569" width="2" height="2"/><rect x="646.0" y="569" width="2" height="2"/><rect x="650.0" y="569" width="2" height="2"/><rect x="654.0" y="569" width="2" height="2"/><rect x="658.0" y="569" width="2" height="2"/></g><g transform="translate(0.0,0.0)" fill="#4a6da3"><rect x="739.0" y="560" width="2" height="2"/><rect x="742.0" y="560" width="2" height="2"/><rect x="745.0" y="560" width="2" height="2"/><rect x="748.2" y="560" width="10.6" height="2"/></g><g transform="translate(0.0,0.0)"><path d="M552,616.3 L545.3,620.7 L552,625.1" fill="none" stroke="#4a6da3" stroke-width="3.4" stroke-linecap="round" stroke-linejoin="round"/><path d="M552.6,620.7 L561.6,615.7 L561.6,625.9 Z" fill="#4a6da3" stroke="#4a6da3" stroke-width="2" stroke-linejoin="round"/></g><g transform="translate(0.0,0.0)"><path d="M652,616.3 L658.7,620.7 L652,625.1" fill="none" stroke="#4a6da3" stroke-width="3.4" stroke-linecap="round" stroke-linejoin="round"/><path d="M651.4,620.7 L642.4,615.7 L642.4,625.9 Z" fill="#4a6da3" stroke="#4a6da3" stroke-width="2" stroke-linejoin="round"/></g><g fill="#4a6da3"><circle cx="749.0" cy="620.7" r="1.8"/><path d="M749.00,617.16 L752.20,613.26 L745.80,613.26 Z" stroke="#4a6da3" stroke-width="0.8" stroke-linejoin="round"/><line x1="749.00" y1="614.16" x2="749.00" y2="611.06" stroke="#4a6da3" stroke-width="2.2"/><path d="M749.00,624.16 L745.80,628.06 L752.20,628.06 Z" stroke="#4a6da3" stroke-width="0.8" stroke-linejoin="round"/><line x1="749.00" y1="627.16" x2="749.00" y2="630.26" stroke="#4a6da3" stroke-width="2.2"/><path d="M745.50,620.66 L741.60,617.46 L741.60,623.86 Z" stroke="#4a6da3" stroke-width="0.8" stroke-linejoin="round"/><line x1="742.50" y1="620.66" x2="739.40" y2="620.66" stroke="#4a6da3" stroke-width="2.2"/><path d="M752.50,620.66 L756.40,623.86 L756.40,617.46 Z" stroke="#4a6da3" stroke-width="0.8" stroke-linejoin="round"/><line x1="755.50" y1="620.66" x2="758.60" y2="620.66" stroke="#4a6da3" stroke-width="2.2"/></g></svg>
</body></html>
